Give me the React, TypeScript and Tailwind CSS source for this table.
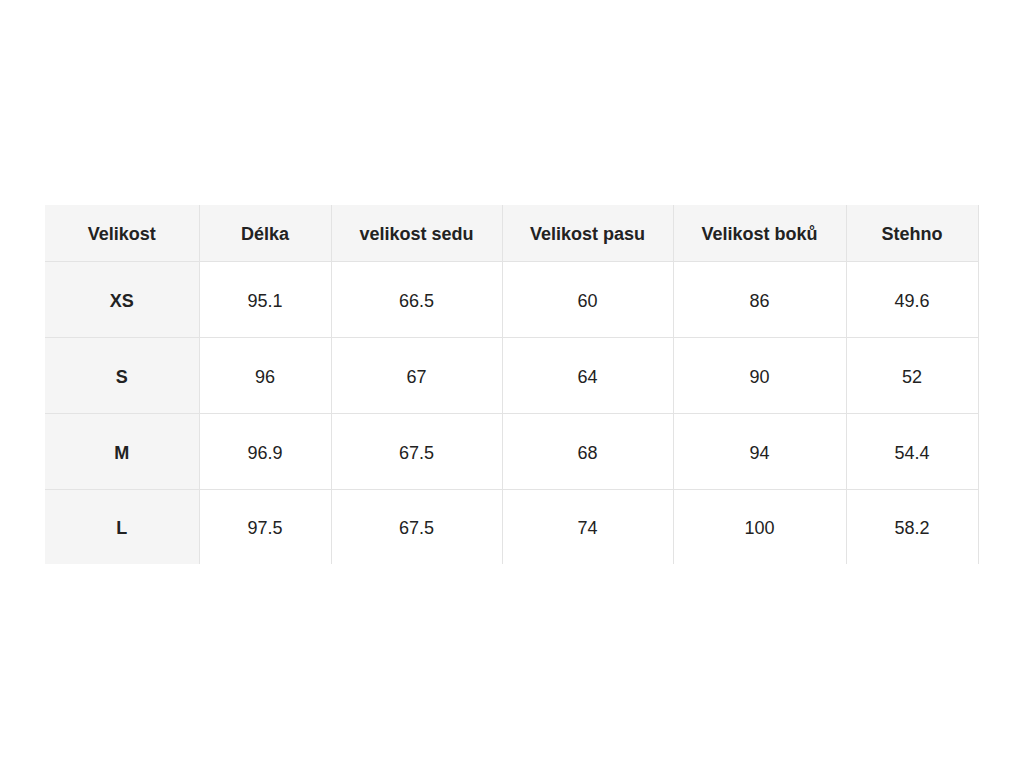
const headers = ["Velikost", "Délka", "velikost sedu", "Velikost pasu", "Velikost boků", "Stehno"]

const rows = [
  ["XS", "95.1", "66.5", "60", "86", "49.6"],
  ["S", "96", "67", "64", "90", "52"],
  ["M", "96.9", "67.5", "68", "94", "54.4"],
  ["L", "97.5", "67.5", "74", "100", "58.2"],
]

const widths = ["w-[154px]", "w-[132px]", "w-[171px]", "w-[171px]", "w-[173px]", "w-[132px]"]

export default function App() {
  return (
    <div className="min-h-screen w-[1024px] h-[768px] bg-white pt-[205px] pl-[45px] font-['Liberation_Sans',Arial,sans-serif] text-[#222222] text-[18px] leading-[20px]">
      <table className="border-collapse table-fixed">
        <thead>
          <tr className="h-[56px] bg-[#f5f5f5]">
            {headers.map((h, i) => (
              <th
                key={h}
                className={`${widths[i]} font-bold text-center border-r border-[#e3e3e3] p-0 pt-[2px]`}
              >
                {h}
              </th>
            ))}
          </tr>
        </thead>
        <tbody>
          {rows.map((r, ri) => (
            <tr key={r[0]} className={ri === 3 ? "h-[75px]" : "h-[76px]"}>
              {r.map((c, ci) => (
                <td
                  key={ci}
                  className={`text-center border-t border-r border-[#e3e3e3] p-0 pt-[3px] ${
                    ci === 0 ? "bg-[#f5f5f5] font-bold" : ""
                  }`}
                >
                  {c}
                </td>
              ))}
            </tr>
          ))}
        </tbody>
      </table>
    </div>
  )
}
